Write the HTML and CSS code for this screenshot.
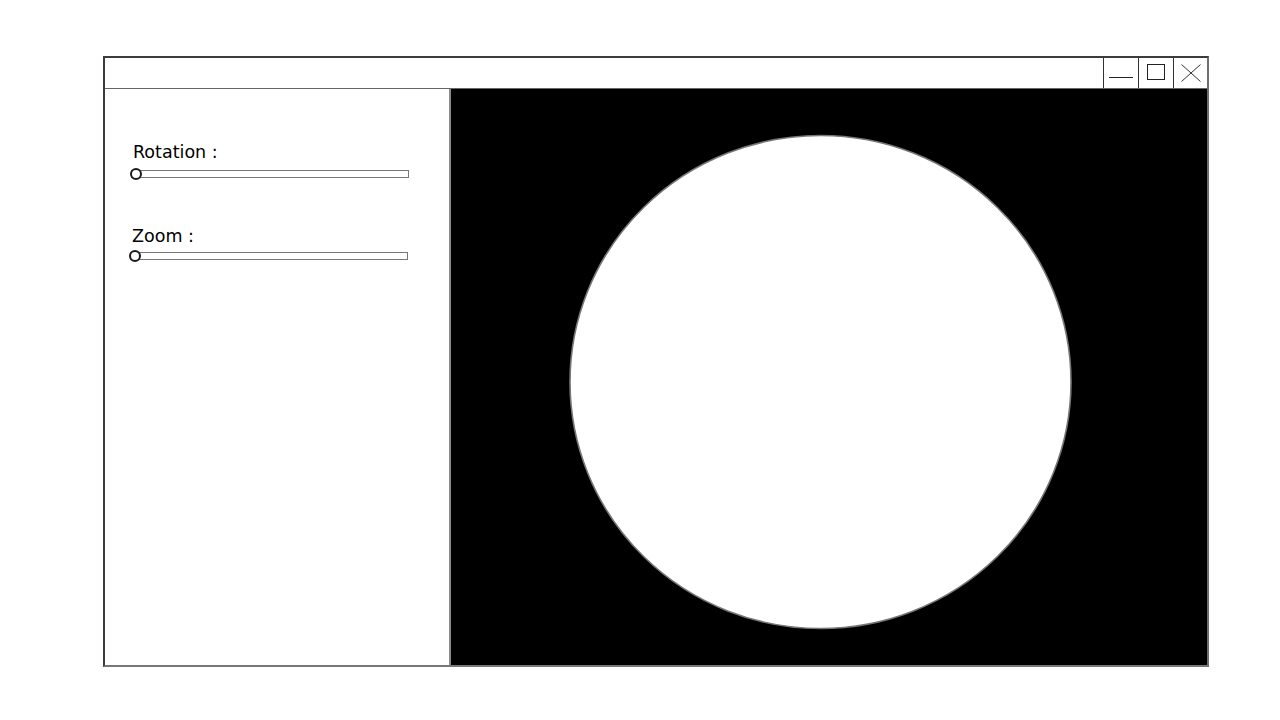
FILE: index.html
```html
<!DOCTYPE html>
<html>
<head>
<meta charset="utf-8">
<link rel="stylesheet" href="styles.css">
</head>
<body>
<div class="window">
  <div class="titlebar">
    <div class="title-space"></div>
    <div class="btn">
      <svg width="34" height="30" viewBox="0 0 34 30"><line x1="5" y1="19.5" x2="29" y2="19.5" stroke="#222" stroke-width="1"/></svg>
    </div>
    <div class="btn">
      <svg width="34" height="30" viewBox="0 0 34 30"><rect x="8.5" y="6.5" width="17" height="15" fill="none" stroke="#222" stroke-width="1"/></svg>
    </div>
    <div class="btn last">
      <svg width="33" height="30" viewBox="0 0 33 30"><path d="M7.5 6.5 L26.5 23.5 M26.5 6.5 L7.5 23.5" stroke="#333" stroke-width="1" fill="none"/></svg>
    </div>
  </div>
  <div class="body">
    <div class="panel">
      <div class="field">
        <div class="label">Rotation :</div>
        <div class="slider"><div class="track"></div><div class="knob"></div></div>
      </div>
      <div class="field second">
        <div class="label">Zoom :</div>
        <div class="slider shift"><div class="track"></div><div class="knob"></div></div>
      </div>
    </div>
    <div class="canvas">
      <svg class="view" width="756" height="575" viewBox="0 0 756 575">
        <ellipse cx="369.5" cy="293" rx="250.5" ry="246.5" fill="#fff" stroke="#777" stroke-width="1.6"/>
      </svg>
    </div>
  </div>
</div>
</body>
</html>
```
FILE: styles.css
```css
html, body {
  margin: 0;
  padding: 0;
  background: #fff;
}
body {
  width: 1280px;
  height: 720px;
  overflow: hidden;
  font-family: "DejaVu Sans", sans-serif;
}
.window {
  box-sizing: border-box;
  margin: 56px 0 0 103px;
  width: 1106px;
  height: 611px;
  border-top: 2px solid #3c3c3c;
  border-left: 2px solid #3c3c3c;
  border-right: 2px solid #6e6e6e;
  border-bottom: 2px solid #777;
  display: flex;
  flex-direction: column;
}
.titlebar {
  height: 30px;
  border-bottom: 1px solid #666;
  display: flex;
  flex: none;
}
.title-space {
  flex: 1;
}
.btn {
  width: 34px;
  height: 30px;
  border-left: 1px solid #333;
  display: flex;
  align-items: center;
  justify-content: center;
}
.btn.last {
  width: 33px;
}
.btn svg { display: block; }
.body {
  flex: 1;
  display: flex;
  min-height: 0;
}
.panel {
  box-sizing: border-box;
  width: 346px;
  flex: none;
  border-right: 2px solid #8a8a8a;
  padding: 53px 0 0 26px;
}
.field {
  display: flex;
  flex-direction: column;
  gap: 8px;
}
.field.second {
  margin-top: 48px;
  gap: 6px;
}
.label {
  font-size: 17.5px;
  line-height: 20px;
  color: #000;
  padding-left: 2px;
}
.field.second .label {
  padding-left: 1px;
}
.slider {
  position: relative;
  width: 278px;
  height: 8px;
}
.slider.shift {
  margin-left: -1px;
}
.track {
  box-sizing: border-box;
  width: 100%;
  height: 8px;
  border: 1px solid #777;
  background: #fff;
}
.knob {
  position: absolute;
  left: -1px;
  top: -2px;
  width: 8px;
  height: 8px;
  border: 2px solid #1a1a1a;
  border-radius: 50%;
  background: #fff;
}
.canvas {
  flex: 1;
  background: #000;
  overflow: hidden;
}
.view { display: block; }
```
